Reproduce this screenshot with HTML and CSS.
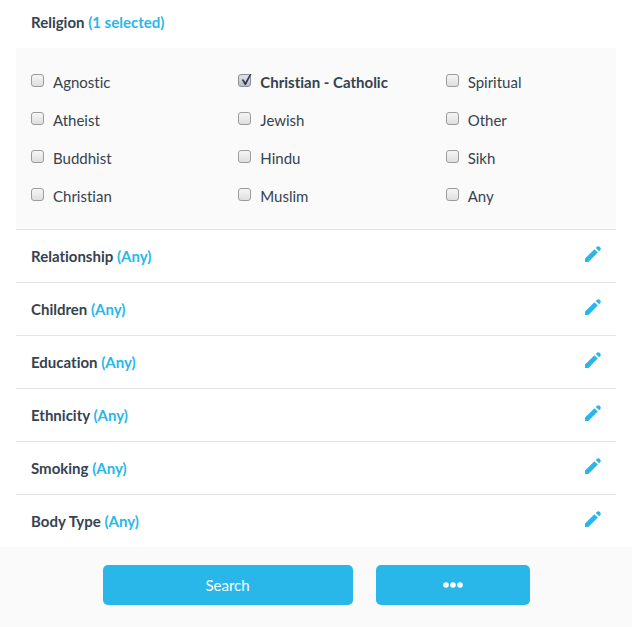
FILE: index.html
```html
<!DOCTYPE html>
<html lang="en">
<head>
    <meta charset="UTF-8">
    <meta name="viewport" content="width=device-width, initial-scale=1.0">
    <title>Search filters</title>
    <link rel="stylesheet" href="styles.css">
</head>
<body>
    <svg class="sprite" aria-hidden="true">
        <symbol id="pencil" viewBox="0 0 16 16">
            <path d="M0 16v-3.400L9.400 3.200l3.400 3.400L3.400 16z"/>
            <path d="M10.800 1.900l.9-.9q1.500-1.500 3.200-.1 1.700 1.800.2 3.400l-.9.900z"/>
        </symbol>
    </svg>

    <form class="search-form">
        <div class="filters">
            <fieldset class="filter-open">
                <legend class="filter-title">Religion <span>(1 selected)</span></legend>
                <div class="options">
                    <label class="option"><input type="checkbox" name="religion">Agnostic</label>
                    <label class="option"><input type="checkbox" name="religion">Atheist</label>
                    <label class="option"><input type="checkbox" name="religion">Buddhist</label>
                    <label class="option"><input type="checkbox" name="religion">Christian</label>
                    <label class="option selected"><input type="checkbox" name="religion" checked>Christian - Catholic</label>
                    <label class="option"><input type="checkbox" name="religion">Jewish</label>
                    <label class="option"><input type="checkbox" name="religion">Hindu</label>
                    <label class="option"><input type="checkbox" name="religion">Muslim</label>
                    <label class="option"><input type="checkbox" name="religion">Spiritual</label>
                    <label class="option"><input type="checkbox" name="religion">Other</label>
                    <label class="option"><input type="checkbox" name="religion">Sikh</label>
                    <label class="option"><input type="checkbox" name="religion">Any</label>
                </div>
            </fieldset>

            <div class="filter-row">
                <div class="filter-title">Relationship <span>(Any)</span></div>
                <button type="button" class="edit" aria-label="Edit relationship"><svg><use href="#pencil"/></svg></button>
            </div>
            <div class="filter-row">
                <div class="filter-title">Children <span>(Any)</span></div>
                <button type="button" class="edit" aria-label="Edit children"><svg><use href="#pencil"/></svg></button>
            </div>
            <div class="filter-row">
                <div class="filter-title">Education <span>(Any)</span></div>
                <button type="button" class="edit" aria-label="Edit education"><svg><use href="#pencil"/></svg></button>
            </div>
            <div class="filter-row">
                <div class="filter-title">Ethnicity <span>(Any)</span></div>
                <button type="button" class="edit" aria-label="Edit ethnicity"><svg><use href="#pencil"/></svg></button>
            </div>
            <div class="filter-row">
                <div class="filter-title">Smoking <span>(Any)</span></div>
                <button type="button" class="edit" aria-label="Edit smoking"><svg><use href="#pencil"/></svg></button>
            </div>
            <div class="filter-row">
                <div class="filter-title">Body Type <span>(Any)</span></div>
                <button type="button" class="edit" aria-label="Edit body type"><svg><use href="#pencil"/></svg></button>
            </div>
        </div>

        <div class="actions">
            <button type="submit" class="btn btn-search">Search</button>
            <button type="button" class="btn btn-more" aria-label="More options">
                <svg class="dots" viewBox="0 0 20 6">
                    <circle cx="3" cy="3" r="2.800"/>
                    <circle cx="10" cy="3" r="2.800"/>
                    <circle cx="17" cy="3" r="2.800"/>
                </svg>
            </button>
        </div>
    </form>
</body>
</html>
```

FILE: styles.css
```css
* {
    box-sizing: border-box;
}
body {
    margin: 0;
    font-family: Lato, 'Open Sans', sans-serif;
    font-size: 15px;
    line-height: 20px;
    font-variant-ligatures: none;
    color: #35424f;
    background-color: #fff;
}
.sprite {
    display: none;
}
.filters {
    padding: 0 16px;
}
.filter-open {
    margin: 0;
    padding: 0;
    border: none;
    min-width: 0;
}
.filter-title {
    font-weight: bold;
}
.filter-title span {
    color: #29b7ea;
}
.filter-open .filter-title {
    padding: 12px 15px 16px;
}
.options {
    display: grid;
    grid-template-columns: repeat(3, 1fr);
    grid-template-rows: repeat(4, auto);
    grid-auto-flow: column;
    gap: 18px 52px;
    padding: 24px 15px 23px;
    background-color: #fafafa;
}
.option {
    display: flex;
    align-items: flex-start;
    gap: 9px;
    white-space: nowrap;
    cursor: pointer;
}
.option.selected {
    font-weight: bold;
}
.option input {
    appearance: none;
    flex: none;
    width: 13px;
    height: 13px;
    margin: 2px 0 0;
    border: 1px solid #9c9c9c;
    border-radius: 3px;
    background: linear-gradient(#f6f6f6, #dedede);
    cursor: pointer;
}
.option input:checked {
    position: relative;
    border-color: #8b8f98;
    background: linear-gradient(#dfe2e8, #b9bfca);
}
/* tick mark */
.option input:checked::after {
    content: "";
    position: absolute;
    left: 1px;
    top: -1px;
    width: 12px;
    height: 11px;
    background-color: #35384a;
    clip-path: polygon(12% 52%, 26% 47%, 41% 74%, 80% 0, 93% 0, 47% 100%, 37% 100%);
}
.filter-row {
    display: flex;
    justify-content: space-between;
    padding: 16px 15px;
    border-top: 1px solid #e4e4e4;
}
.edit {
    display: flex;
    align-items: flex-start;
    height: 20px;
    padding: 0;
    border: none;
    background: none;
    cursor: pointer;
}
.edit svg {
    width: 16px;
    height: 16px;
    fill: #29b7ea;
}
.actions {
    display: flex;
    justify-content: center;
    gap: 23px;
    padding: 18px 16px 22px;
    background-color: #fafafa;
}
.btn {
    display: flex;
    align-items: center;
    justify-content: center;
    height: 40px;
    border: none;
    border-radius: 5px;
    background-color: #29b7ea;
    color: #fff;
    font-family: inherit;
    font-size: 15px;
    cursor: pointer;
}
.btn:hover {
    background-color: #1ea6d7;
}
.btn-search {
    width: 250px;
}
.btn-more {
    width: 154px;
}
.dots {
    width: 20px;
    height: 6px;
    fill: #fff;
}
```
